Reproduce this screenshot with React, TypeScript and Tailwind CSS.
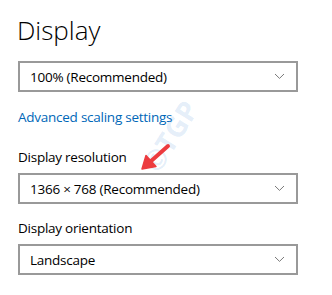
const Select = ({ value }: { value: string }) => {
  return (
    <div className="w-[280px] h-[31px] border-2 border-[#999999] bg-white flex items-center justify-between pl-[10px] pr-[10px]">
      <span className="text-[13.5px] leading-[20px] tracking-[-0.25px] text-black pt-[1px]">{value}</span>
      <svg width="11" height="7" viewBox="0 0 11 7" className="mr-[1px]">
        <path d="M1 1 L5.5 5.4 L10 1" fill="none" stroke="#7a7a7a" strokeWidth="1" />
      </svg>
    </div>
  );
};

const App = () => {
  return (
    <main
      className="relative w-[332px] h-[295px] overflow-hidden bg-white pl-[18px]"
      style={{ fontFamily: '"Open Sans", "Noto Sans", sans-serif' }}
    >
      <h1 className="text-[26px] leading-[26px] font-light text-black pt-[17px] -ml-[1px]">Display</h1>

      <div className="mt-[18px]">
        <Select value="100% (Recommended)" />
      </div>

      <a href="#" className="block mt-[15px] text-[13.5px] leading-[20px] tracking-[-0.25px] text-[#0067b8]">
        Advanced scaling settings
      </a>

      <p className="mt-[20px] text-[13.5px] leading-[20px] tracking-[-0.25px] text-black">Display resolution</p>
      <div className="mt-[6px]">
        <Select value="1366 × 768 (Recommended)" />
      </div>

      <p className="mt-[14px] text-[13.5px] leading-[20px] tracking-[-0.25px] text-black">Display orientation</p>
      <div className="mt-[6px]">
        <Select value="Landscape" />
      </div>

      {/* watermark */}
      <span className="absolute left-[131px] top-[121px] -rotate-[58deg] text-[28px] leading-[30px] font-bold text-[#3d7fd6]/15 pointer-events-none select-none">
        ©TGP
      </span>

      {/* red arrow */}
      <svg className="absolute left-[136px] top-[138px]" width="40" height="38" viewBox="0 0 40 38">
        <line x1="32" y1="8" x2="14" y2="24" stroke="#ec3b3f" strokeWidth="4" strokeLinecap="round" />
        <polygon points="6,31 20,28.5 10,17.5" fill="#ec3b3f" stroke="#ec3b3f" strokeWidth="1.5" strokeLinejoin="round" />
      </svg>
    </main>
  );
};

export default App;
